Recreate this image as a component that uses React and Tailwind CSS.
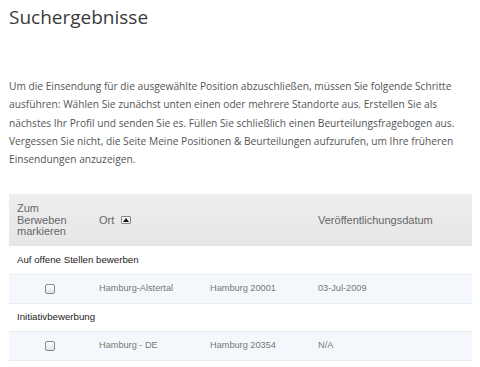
import React from 'react';

const rows = [
  { group: 'Auf offene Stellen bewerben', name: 'Hamburg-Alstertal', city: 'Hamburg 20001', date: '03-Jul-2009' },
  { group: 'Initiativbewerbung', name: 'Hamburg - DE', city: 'Hamburg 20354', date: 'N/A' },
];

const App = () => {
  return (
    <div className="bg-white w-[480px] h-[367px] overflow-hidden px-[9px] pt-[4px]">
      <h1 className="text-[19px] leading-[26px] text-[#3a3a3a] font-['Open_Sans',sans-serif]">
        Suchergebnisse
      </h1>

      <p className="mt-[47px] text-[10.2px] leading-[18.3px] text-[#555] font-['Open_Sans',sans-serif]">
        Um die Einsendung für die ausgewählte Position abzuschließen, müssen Sie folgende Schritte
        ausführen: Wählen Sie zunächst unten einen oder mehrere Standorte aus. Erstellen Sie als
        nächstes Ihr Profil und senden Sie es. Füllen Sie schließlich einen Beurteilungsfragebogen aus.
        Vergessen Sie nicht, die Seite Meine Positionen &amp; Beurteilungen aufzurufen, um Ihre früheren
        Einsendungen anzuzeigen.
      </p>

      <table className="mt-[26px] w-[463px] border-collapse table-fixed font-['Liberation_Sans',Arial,sans-serif]">
        <colgroup>
          <col className="w-[81px]" />
          <col className="w-[111px]" />
          <col className="w-[108px]" />
          <col />
        </colgroup>
        <thead>
          <tr className="h-[52px] bg-gradient-to-b from-[#eeeeee] to-[#e6e6e6] text-[#666] text-[11px] leading-[11.5px]">
            <th className="text-left font-normal pl-[8px] align-middle">
              Zum
              <br />
              Berweben
              <br />
              markieren
            </th>
            <th className="text-left font-normal pl-[9px] align-middle" colSpan={2}>
              <span className="inline-flex items-center gap-[7px]">
                Ort
                <span className="inline-flex items-center justify-center w-[10px] h-[8px] border border-[#888] bg-[#f4f4f4] rounded-[1px]">
                  <svg width="6" height="4" viewBox="0 0 6 4">
                    <path d="M0 4 L3 0 L6 4 Z" fill="#111" />
                  </svg>
                </span>
              </span>
            </th>
            <th className="text-left font-normal pl-[9px] align-middle">Veröffentlichungsdatum</th>
          </tr>
        </thead>
        <tbody>
          {rows.map((r) => (
            <React.Fragment key={r.name}>
              <tr className="h-[28px]">
                <td colSpan={4} className="pl-[8px] text-[#222] text-[9.7px] align-middle">
                  {r.group}
                </td>
              </tr>
              <tr className="h-[29px] bg-[#f4f8fc] border-t border-b border-[#e8edf1] text-[#777] text-[9.2px]">
                <td className="text-center align-middle">
                  <span className="inline-block align-middle w-[10px] h-[10px] border border-[#8a8a8a] rounded-[2px] bg-gradient-to-b from-white to-[#e2e2e2]" />
                </td>
                <td className="pl-[9px] align-middle">{r.name}</td>
                <td className="pl-[9px] align-middle">{r.city}</td>
                <td className="pl-[9px] align-middle">{r.date}</td>
              </tr>
            </React.Fragment>
          ))}
        </tbody>
      </table>
    </div>
  );
};

export default App;
